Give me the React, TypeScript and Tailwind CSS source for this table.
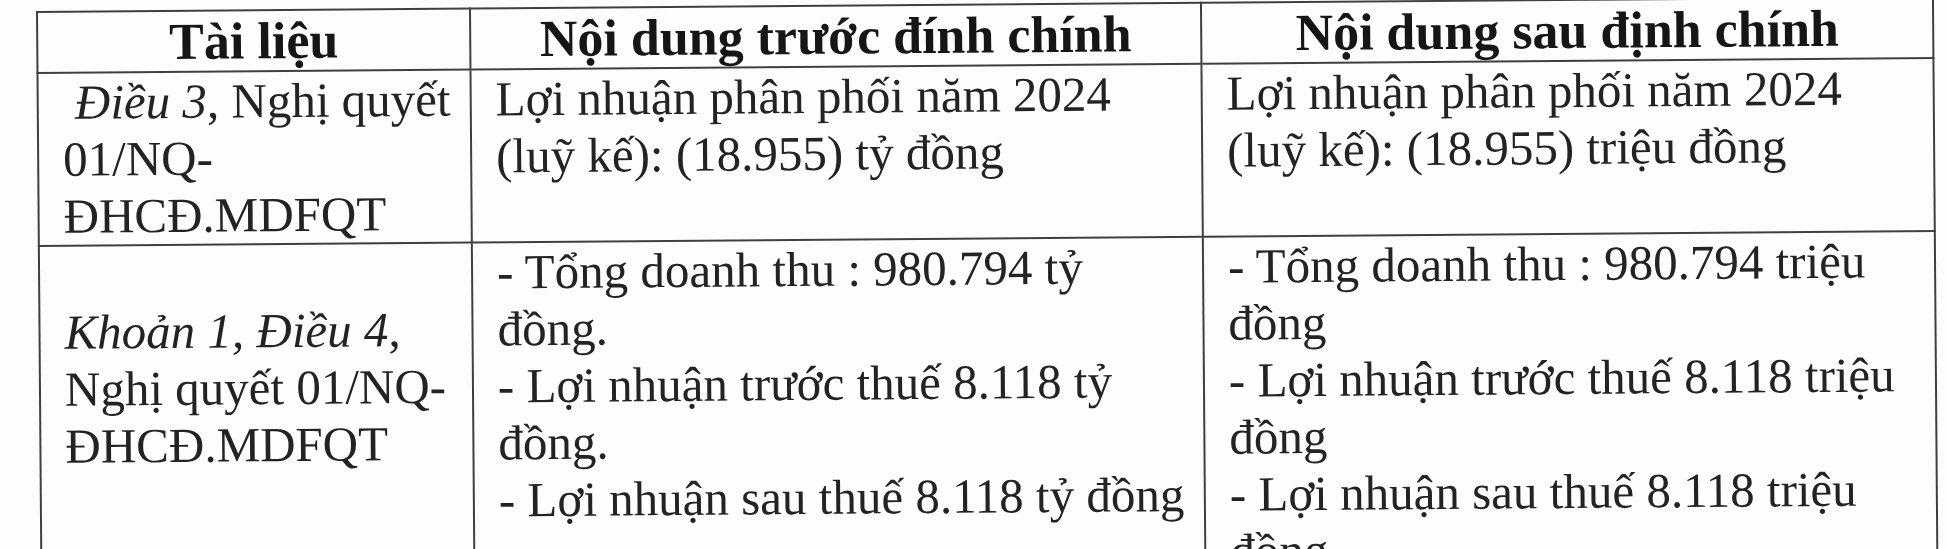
import React from "react";

const headers = ["Tài liệu", "Nội dung trước đính chính", "Nội dung sau định chính"];

const Lines = ({ lines }: { lines: React.ReactNode[] }) => (
  <>
    {lines.map((line, i) => (
      <div key={i} className="whitespace-nowrap">
        {line}
      </div>
    ))}
  </>
);

export default function App() {
  const cell = "border-2 border-[#404040] p-0 pl-[24px] align-top text-[49px] leading-[57px]";

  return (
    <div className="h-[549px] w-full overflow-hidden bg-[#fdfdfd] font-['Liberation_Serif','Times_New_Roman',serif] text-[#232323]">
      <div className="pl-[36px] pt-[11px]">
        <div className="w-[1896px] origin-top-left -rotate-[0.45deg]">
          <table className="w-full table-fixed border-collapse">
            <colgroup>
              <col className="w-[433px]" />
              <col className="w-[731px]" />
              <col className="w-[732px]" />
            </colgroup>
            <thead>
              <tr>
                {headers.map((h) => (
                  <th
                    key={h}
                    className="h-[61px] border-2 border-[#404040] p-0 text-center align-middle text-[52px] leading-[58px] font-bold text-[#161616]"
                  >
                    {h}
                  </th>
                ))}
              </tr>
            </thead>
            <tbody>
              {/* Điều 3 */}
              <tr>
                <td className={cell}>
                  <Lines
                    lines={[
                      <>
                        {"\u00a0"}
                        <i>Điều 3</i>, Nghị quyết
                      </>,
                      "01/NQ-",
                      "ĐHCĐ.MDFQT",
                    ]}
                  />
                </td>
                <td className={cell}>
                  <Lines lines={["Lợi nhuận phân phối năm 2024", "(luỹ kế): (18.955) tỷ đồng"]} />
                </td>
                <td className={cell}>
                  <Lines lines={["Lợi nhuận phân phối năm 2024", "(luỹ kế): (18.955) triệu đồng"]} />
                </td>
              </tr>

              {/* Khoản 1, Điều 4 */}
              <tr>
                <td className={cell + " pt-[57px]"}>
                  <Lines
                    lines={[
                      <>
                        <i>Khoản 1, Điều 4</i>,
                      </>,
                      "Nghị quyết 01/NQ-",
                      "ĐHCĐ.MDFQT",
                    ]}
                  />
                </td>
                <td className={cell}>
                  <Lines
                    lines={[
                      "- Tổng doanh thu : 980.794 tỷ",
                      "đồng.",
                      "- Lợi nhuận trước thuế 8.118 tỷ",
                      "đồng.",
                      "- Lợi nhuận sau thuế 8.118 tỷ đồng",
                    ]}
                  />
                </td>
                <td className={cell}>
                  <Lines
                    lines={[
                      "- Tổng doanh thu : 980.794 triệu",
                      "đồng",
                      "- Lợi nhuận trước thuế 8.118 triệu",
                      "đồng",
                      "- Lợi nhuận sau thuế 8.118 triệu",
                      "đồng",
                    ]}
                  />
                </td>
              </tr>
            </tbody>
          </table>
        </div>
      </div>
    </div>
  );
}
